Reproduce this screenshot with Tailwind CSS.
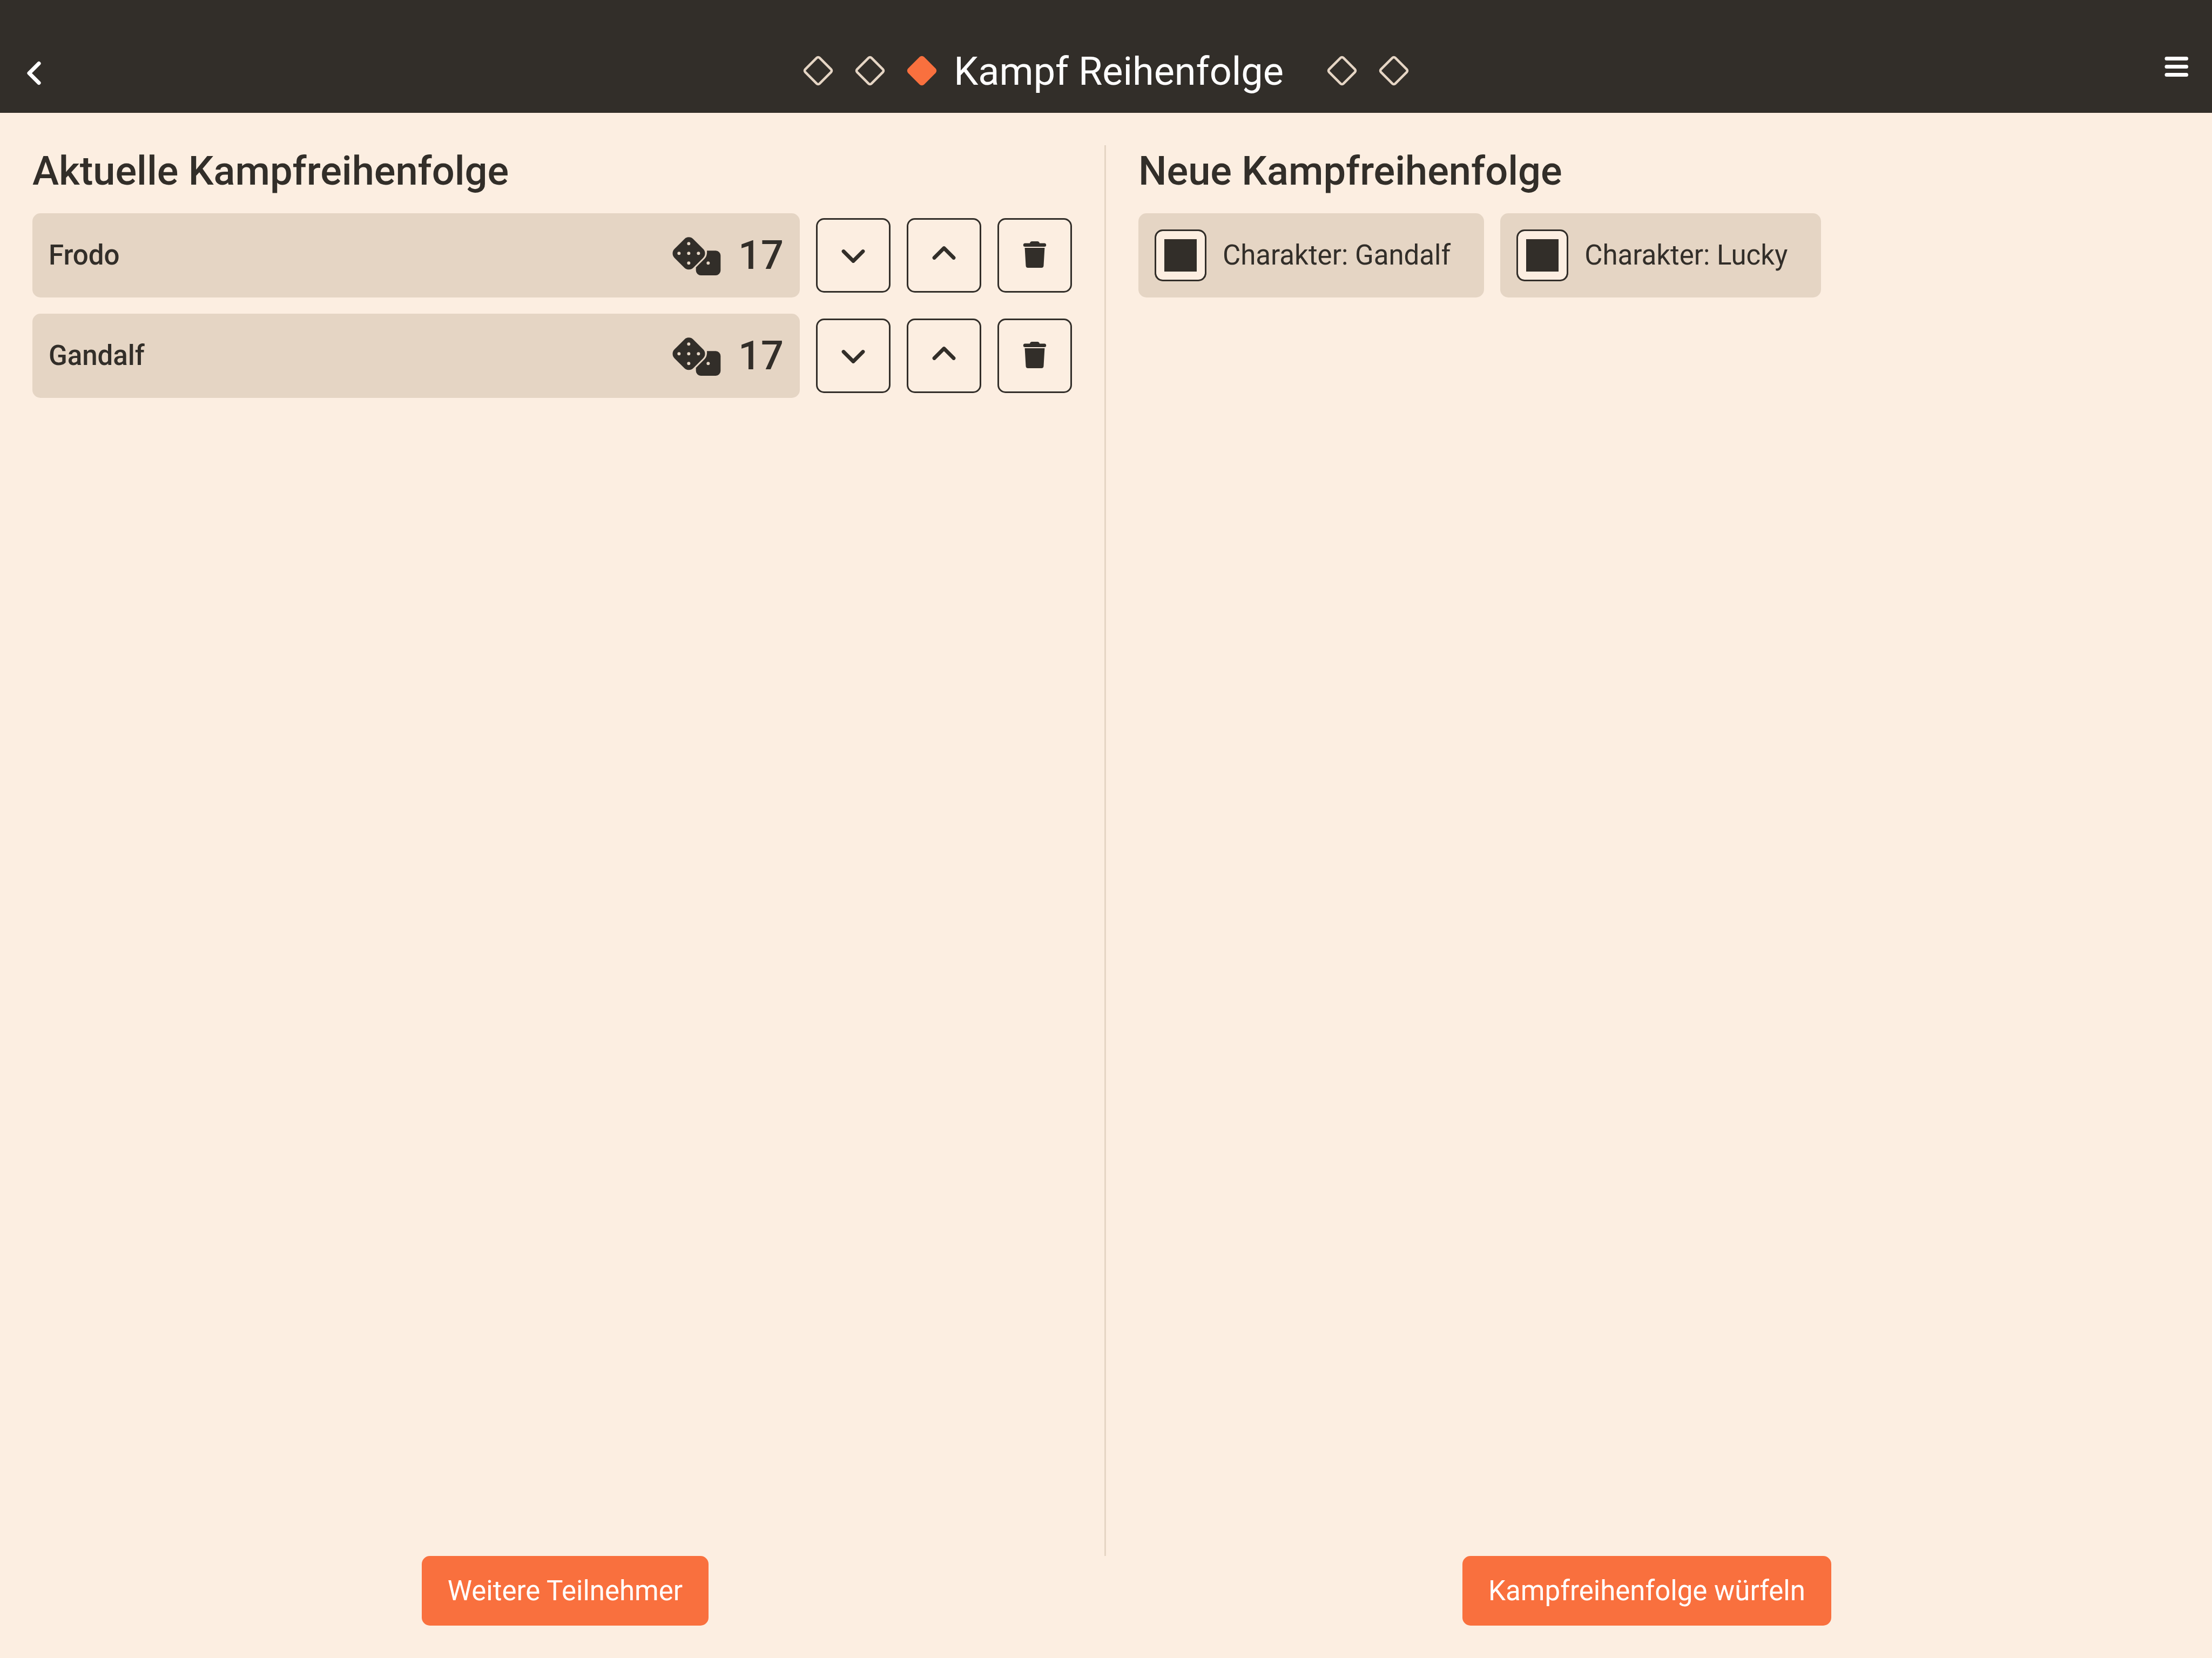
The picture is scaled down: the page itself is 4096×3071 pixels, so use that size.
<!DOCTYPE html>
<html lang="de">
<head>
<meta charset="utf-8">
<meta name="viewport" content="width=device-width, initial-scale=1">
<title>Kampf Reihenfolge</title>
<script src="https://cdn.jsdelivr.net/npm/@tailwindcss/browser@4"></script>
</head>
<body class="flex min-h-screen flex-col bg-[#fceee1] font-[Roboto,sans-serif] text-[51px] leading-[60px] text-[#322e29]">

<!-- Shared icon shapes -->
<svg class="hidden" aria-hidden="true">
  <symbol id="diamond" viewBox="0 2 60 60">
    <rect x="11.25" y="11.25" width="37.5" height="37.5" rx="3.75" transform="rotate(45 30 30)" fill="none" stroke="currentColor" stroke-width="4.6"/>
  </symbol>
  <symbol id="diamond-filled" viewBox="0 2 60 60">
    <rect x="9" y="9" width="42" height="42" rx="6" transform="rotate(45 30 30)" fill="currentColor"/>
  </symbol>
  <symbol id="dice" viewBox="0 -14 270 234">
    <path fill="currentColor" fill-rule="evenodd" d="M67 12 L12 67 A35 35 0 0 0 12 117 L67 172 A35 35 0 0 0 116 172 L171 117 A35 35 0 0 0 171 67 L116 12 A35 35 0 0 0 67 12Z M91 29a9 9 0 1 1 0 18a9 9 0 1 1 0-18Z M37 83a9 9 0 1 1 0 18a9 9 0 1 1 0-18Z M91 83a9 9 0 1 1 0 18a9 9 0 1 1 0-18Z M145 83a9 9 0 1 1 0 18a9 9 0 1 1 0-18Z M91 137a9 9 0 1 1 0 18a9 9 0 1 1 0-18Z"/>
    <path fill="currentColor" fill-rule="evenodd" d="M192 77 H241 A27 27 0 0 1 268 104 V187 A27 27 0 0 1 241 214 H158 A27 27 0 0 1 131 187 V170 L179 122 C190 111 194 94 192 77Z M199 137a9 9 0 1 1 0 18a9 9 0 1 1 0-18Z"/>
  </symbol>
  <symbol id="chevron-down" viewBox="0 0 60 60">
    <path d="M12 22.5 L30 40.5 L48 22.5" fill="none" stroke="currentColor" stroke-width="6.8" stroke-linecap="round" stroke-linejoin="round"/>
  </symbol>
  <symbol id="chevron-up" viewBox="0 0 60 60">
    <path d="M12 34.5 L30 16.5 L48 34.5" fill="none" stroke="currentColor" stroke-width="6.8" stroke-linecap="round" stroke-linejoin="round"/>
  </symbol>
  <symbol id="trash" viewBox="0 0 60 60">
    <path fill="currentColor" d="M21 7.5 Q21.600 4 25 4 H35 Q38.400 4 39 7.500 H48 Q51.200 7.500 51.200 11 Q51.200 14 48 14 H12 Q8.800 14 8.800 11 Q8.800 7.500 12 7.500Z M11.600 16 H48.400 L46.500 49 Q46.300 53 42.500 53 H17.500 Q13.700 53 13.500 49Z"/>
  </symbol>
</svg>

<header class="grid h-[209px] shrink-0 grid-cols-[1fr_auto_1fr] items-center bg-[#322e29] px-[36px] pt-[57px] text-white">
  <button type="button" aria-label="Zurück" class="justify-self-start">
    <svg class="size-[60px]" viewBox="0 0 60 60" fill="none" stroke="currentColor" stroke-width="7.2" stroke-linecap="round" stroke-linejoin="round"><path d="M36 14.500 L18 32.500 L36 50.500"/></svg>
  </button>
  <div class="flex items-center">
    <div class="flex gap-[36px] text-[#e5d5c4]">
      <svg class="size-[60px]"><use href="#diamond"/></svg>
      <svg class="size-[60px]"><use href="#diamond"/></svg>
      <svg class="size-[60px] text-[#f9703e]"><use href="#diamond-filled"/></svg>
    </div>
    <h1 class="mr-[78px] ml-[29px] text-[72px] leading-[96px] font-normal">Kampf Reihenfolge</h1>
    <div class="flex gap-[36px] text-[#e5d5c4]">
      <svg class="size-[60px]"><use href="#diamond"/></svg>
      <svg class="size-[60px]"><use href="#diamond"/></svg>
    </div>
  </div>
  <button type="button" aria-label="Menü" class="justify-self-end">
    <svg class="size-[60px]" viewBox="0 0 60 60" fill="currentColor"><rect x="8.500" y="2" width="43.500" height="7" rx="3.500"/><rect x="8.500" y="17" width="43.500" height="7" rx="3.500"/><rect x="8.500" y="32" width="43.500" height="7" rx="3.500"/></svg>
  </button>
</header>

<main class="grid flex-1 grid-cols-2 px-[60px] pt-[60px]">
  <section class="border-r-3 border-[#e5d5c4] pr-[60px]">
    <h2 class="mb-[30px] text-[74px] leading-[96px] font-medium">Aktuelle Kampfreihenfolge</h2>
    <ul class="flex flex-col gap-[30px]">
      <li class="flex items-center gap-[30px]">
        <div class="flex h-[156px] flex-1 items-center gap-[32px] rounded-[15px] bg-[#e5d5c4] px-[30px] font-medium">
          <span class="flex-1">Frodo</span>
          <svg class="h-[78px] w-[90px]"><use href="#dice"/></svg>
          <span class="text-[74px] leading-[96px]">17</span>
        </div>
        <button type="button" aria-label="Frodo nach unten" class="flex size-[138px] items-center justify-center rounded-[15px] border-3 border-[#322e29]"><svg class="size-[60px]"><use href="#chevron-down"/></svg></button>
        <button type="button" aria-label="Frodo nach oben" class="flex size-[138px] items-center justify-center rounded-[15px] border-3 border-[#322e29]"><svg class="size-[60px]"><use href="#chevron-up"/></svg></button>
        <button type="button" aria-label="Frodo entfernen" class="flex size-[138px] items-center justify-center rounded-[15px] border-3 border-[#322e29]"><svg class="size-[60px]"><use href="#trash"/></svg></button>
      </li>
      <li class="flex items-center gap-[30px]">
        <div class="flex h-[156px] flex-1 items-center gap-[32px] rounded-[15px] bg-[#e5d5c4] px-[30px] font-medium">
          <span class="flex-1">Gandalf</span>
          <svg class="h-[78px] w-[90px]"><use href="#dice"/></svg>
          <span class="text-[74px] leading-[96px]">17</span>
        </div>
        <button type="button" aria-label="Gandalf nach unten" class="flex size-[138px] items-center justify-center rounded-[15px] border-3 border-[#322e29]"><svg class="size-[60px]"><use href="#chevron-down"/></svg></button>
        <button type="button" aria-label="Gandalf nach oben" class="flex size-[138px] items-center justify-center rounded-[15px] border-3 border-[#322e29]"><svg class="size-[60px]"><use href="#chevron-up"/></svg></button>
        <button type="button" aria-label="Gandalf entfernen" class="flex size-[138px] items-center justify-center rounded-[15px] border-3 border-[#322e29]"><svg class="size-[60px]"><use href="#trash"/></svg></button>
      </li>
    </ul>
  </section>

  <section class="pl-[60px]">
    <h2 class="mb-[30px] text-[74px] leading-[96px] font-medium">Neue Kampfreihenfolge</h2>
    <div class="flex flex-wrap gap-[30px]">
      <label class="flex h-[156px] items-center gap-[30px] rounded-[15px] bg-[#e5d5c4] pr-[62px] pl-[30px]">
        <input type="checkbox" checked class="size-[96px] appearance-none rounded-[15px] border-3 border-[#322e29] bg-[#fceee1] checked:bg-[#322e29] checked:shadow-[inset_0_0_0_15px_#fceee1]">
        <span>Charakter: Gandalf</span>
      </label>
      <label class="flex h-[156px] items-center gap-[30px] rounded-[15px] bg-[#e5d5c4] pr-[62px] pl-[30px]">
        <input type="checkbox" checked class="size-[96px] appearance-none rounded-[15px] border-3 border-[#322e29] bg-[#fceee1] checked:bg-[#322e29] checked:shadow-[inset_0_0_0_15px_#fceee1]">
        <span>Charakter: Lucky</span>
      </label>
    </div>
  </section>
</main>

<footer class="grid grid-cols-2 justify-items-center px-[45px] pb-[60px] text-white">
  <button type="button" class="h-[129px] rounded-[15px] bg-[#f9703e] px-[48px]">Weitere Teilnehmer</button>
  <button type="button" class="h-[129px] rounded-[15px] bg-[#f9703e] px-[48px]">Kampfreihenfolge würfeln</button>
</footer>
</body>
</html>
